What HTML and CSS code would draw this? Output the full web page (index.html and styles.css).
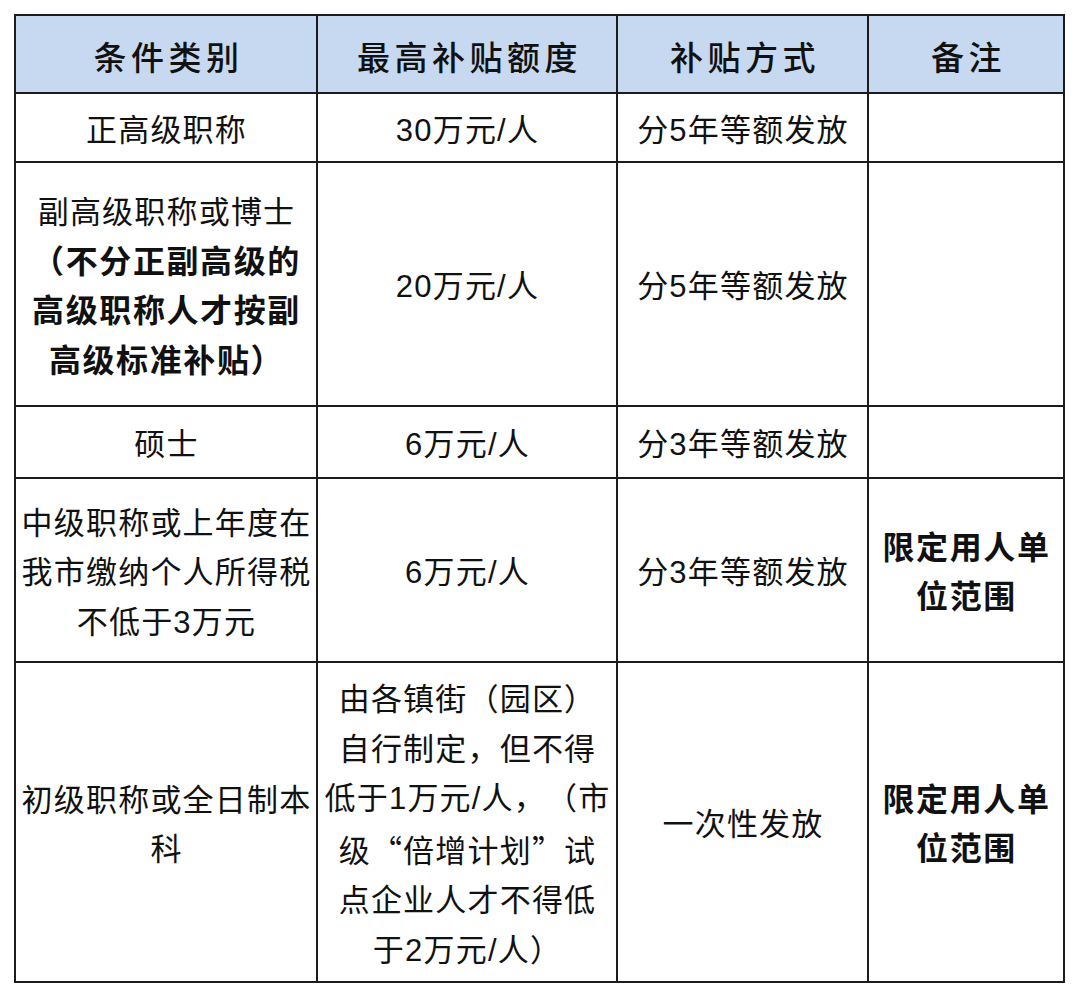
FILE: index.html
```html
<!DOCTYPE html>
<html lang="zh-CN">
<head>
<meta charset="utf-8">
<title>人才补贴</title>
<link rel="stylesheet" href="styles.css">
</head>
<body>
<table class="tbl">
  <colgroup>
    <col class="c1"><col class="c2"><col class="c3"><col class="c4">
  </colgroup>
  <thead>
    <tr class="r-head">
      <th>条件类别</th>
      <th>最高补贴额度</th>
      <th>补贴方式</th>
      <th>备注</th>
    </tr>
  </thead>
  <tbody>
    <tr class="r1">
      <td>正高级职称</td>
      <td>30万元/人</td>
      <td>分5年等额发放</td>
      <td></td>
    </tr>
    <tr class="r2">
      <td>副高级职称或博士<br><b>（不分正副高级的<br>高级职称人才按副<br>高级标准补贴）</b></td>
      <td>20万元/人</td>
      <td>分5年等额发放</td>
      <td></td>
    </tr>
    <tr class="r3">
      <td>硕士</td>
      <td>6万元/人</td>
      <td>分3年等额发放</td>
      <td></td>
    </tr>
    <tr class="r4">
      <td>中级职称或上年度在<br>我市缴纳个人所得税<br>不低于3万元</td>
      <td>6万元/人</td>
      <td>分3年等额发放</td>
      <td><b>限定用人单<br>位范围</b></td>
    </tr>
    <tr class="r5">
      <td>初级职称或全日制本<br>科</td>
      <td>由各镇街（园区）<br>自行制定，但不得<br>低于1万元/人，（市<br>级<span class="cjk">“</span>倍增计划<span class="cjk">”</span>试<br>点企业人才不得低<br>于2万元/人）</td>
      <td>一次性发放</td>
      <td><b>限定用人单<br>位范围</b></td>
    </tr>
  </tbody>
</table>
</body>
</html>
```

FILE: styles.css
```css
html, body {
  margin: 0;
  padding: 0;
  background: #ffffff;
}
body {
  padding: 14px 0 0 14px;
  font-family: "Liberation Sans", "Noto Sans CJK SC", sans-serif;
  color: #111111;
}
.tbl {
  border-collapse: collapse;
  table-layout: fixed;
  width: 1051px;
  text-spacing-trim: space-all;
}
.c1 { width: 302px; }
.c2 { width: 300px; }
.c3 { width: 251px; }
.c4 { width: 196px; }
.tbl th,
.tbl td {
  border: 2px solid #1c1c1c;
  text-align: center;
  vertical-align: middle;
  padding: 6px 0 0 1px;
  font-size: 31px;
  line-height: 49.5px;
  letter-spacing: 1.2px;
  font-weight: 400;
}
.tbl th {
  background: #c6d9f0;
  font-size: 33px;
  letter-spacing: 4.5px;
  font-weight: 500;
  padding: 10px 0 0 5px;
}
.tbl b {
  font-weight: 700;
  font-size: 32px;
  letter-spacing: 1.6px;
}
.cjk {
  font-family: "Noto Sans CJK SC", sans-serif;
}
.r-head th { height: 66px; }
.r1 td { height: 61px; }
.r2 td { height: 236px; }
.r3 td { height: 64px; }
.r4 td { height: 176px; }
.r5 td { height: 312px; }
```
